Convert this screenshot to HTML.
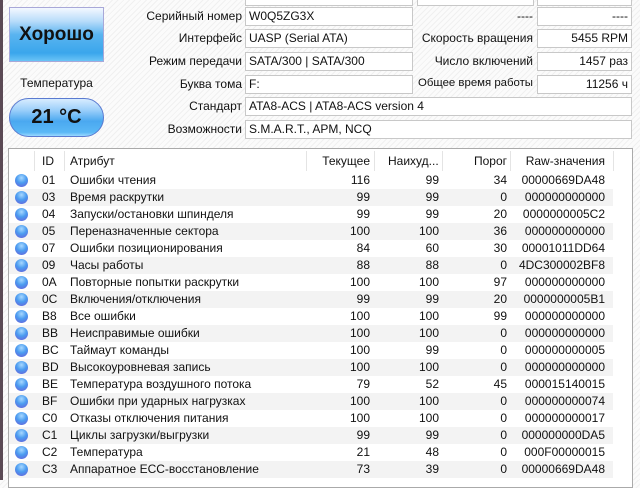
<!DOCTYPE html>
<html><head><meta charset="utf-8"><style>
*{margin:0;padding:0;box-sizing:border-box}
body{width:640px;height:480px;overflow:hidden;position:relative;font-family:"Liberation Sans","DejaVu Sans",sans-serif;font-size:12px;color:#111;
background:repeating-linear-gradient(135deg,#fbfbfb 0 3px,#f0f0f0 3px 4px);}
.edge{position:absolute;left:0;top:0;width:3px;height:480px;background:#5b4a55}
.good{position:absolute;left:9px;top:7px;width:95px;height:55px;border:1px solid #a8a8d8;
background:linear-gradient(#f4f8ff 0%,#b8dcfa 25%,#5ab4f0 50%,#3aa6ec 85%,#6ac4f6 100%);
font-weight:bold;font-size:19px;text-align:center;line-height:53px}
.tlabel{position:absolute;left:9px;top:76px;width:95px;text-align:center}
.temp{position:absolute;left:9px;top:98px;width:95px;height:39px;border-radius:20px;border:1px solid #5a7ad0;
background:linear-gradient(#d8ecff 0%,#9ccffa 30%,#4aa8f0 60%,#5ab8f6 90%,#9ad8ff 100%);
font-weight:bold;font-size:20px;text-align:center;line-height:37px}
.lab{position:absolute;text-align:right;white-space:nowrap}
.box{position:absolute;height:19px;border:1px solid #c8c8c8;background:#fff;padding:0 3px;line-height:17px;white-space:nowrap;overflow:hidden}
.r{text-align:right}
.tbl{position:absolute;left:8px;top:148px;width:625px;height:340px;border:1px solid #aaa;background:#fff;overflow:hidden}
.row{position:absolute;left:0;width:604px;height:17px;line-height:17px}
.row.alt{background:#f3f3f3}
.row span{position:absolute;white-space:nowrap}
.hdr{top:2px;height:20px;line-height:20px}
.sep{position:absolute;top:0;width:1px;height:20px;background:#e4e4e4}
.dot{position:absolute;left:6px;top:2px;width:13px;height:13px;border-radius:50%;
background:radial-gradient(circle at 50% 30%,#a8d8ff 0%,#4a9cf0 45%,#6a5ad8 100%)}
</style></head><body>
<div class="edge"></div>
<div class="box" style="left:245px;top:-13px;width:168px"></div>
<div class="box" style="left:417px;top:-13px;width:117px"></div>
<div class="box" style="left:537px;top:-13px;width:95px"></div>
<div class="good">Хорошо</div>
<div class="tlabel">Температура</div>
<div class="temp">21 °C</div>

<div class="lab" style="right:398px;top:9px">Серийный номер</div>
<div class="box" style="left:245px;top:7px;width:168px">W0Q5ZG3X</div>
<div class="lab" style="right:107px;top:9px">----</div>
<div class="box r" style="left:537px;top:7px;width:95px">----</div>

<div class="lab" style="right:398px;top:31px">Интерфейс</div>
<div class="box" style="left:245px;top:29px;width:168px">UASP (Serial ATA)</div>
<div class="lab" style="right:107px;top:31px">Скорость вращения</div>
<div class="box r" style="left:537px;top:29px;width:95px">5455 RPM</div>

<div class="lab" style="right:398px;top:54px">Режим передачи</div>
<div class="box" style="left:245px;top:52px;width:168px">SATA/300 | SATA/300</div>
<div class="lab" style="right:107px;top:54px">Число включений</div>
<div class="box r" style="left:537px;top:52px;width:95px">1457 раз</div>

<div class="lab" style="right:398px;top:77px">Буква тома</div>
<div class="box" style="left:245px;top:75px;width:168px">F:</div>
<div class="lab" style="right:107px;top:77px;font-size:11.4px">Общее время работы</div>
<div class="box r" style="left:537px;top:75px;width:95px">11256 ч</div>

<div class="lab" style="right:398px;top:99px">Стандарт</div>
<div class="box" style="left:245px;top:97px;width:387px">ATA8-ACS | ATA8-ACS version 4</div>
<div class="lab" style="right:398px;top:122px">Возможности</div>
<div class="box" style="left:245px;top:120px;width:387px">S.M.A.R.T., APM, NCQ</div>

<div class="tbl">
<div class="row hdr">
<span style="left:33px">ID</span><span style="left:61px">Атрибут</span>
<span style="right:243px">Текущее</span><span style="left:379px">Наихуд...</span>
<span style="right:106px">Порог</span><span style="right:8px">Raw-значения</span>
<div class="sep" style="left:25px"></div><div class="sep" style="left:55px"></div><div class="sep" style="left:297px"></div><div class="sep" style="left:365px"></div><div class="sep" style="left:433px"></div><div class="sep" style="left:501px"></div><div class="sep" style="left:604px"></div>
</div>
<div id="rows"></div>
</div>
<script>
var d=[["01","Ошибки чтения","116","99","34","00000669DA48"],["03","Время раскрутки","99","99","0","000000000000"],["04","Запуски/остановки шпинделя","99","99","20","0000000005C2"],["05","Переназначенные сектора","100","100","36","000000000000"],["07","Ошибки позиционирования","84","60","30","00001011DD64"],["09","Часы работы","88","88","0","4DC300002BF8"],["0A","Повторные попытки раскрутки","100","100","97","000000000000"],["0C","Включения/отключения","99","99","20","0000000005B1"],["B8","Все ошибки","100","100","99","000000000000"],["BB","Неисправимые ошибки","100","100","0","000000000000"],["BC","Таймаут команды","100","99","0","000000000005"],["BD","Высокоуровневая запись","100","100","0","000000000000"],["BE","Температура воздушного потока","79","52","45","000015140015"],["BF","Ошибки при ударных нагрузках","100","100","0","000000000074"],["C0","Отказы отключения питания","100","100","0","000000000017"],["C1","Циклы загрузки/выгрузки","99","99","0","000000000DA5"],["C2","Температура","21","48","0","000F00000015"],["C3","Аппаратное ECC-восстановление","73","39","0","00000669DA48"]];
var h="";d.forEach(function(r,i){h+='<div class="row'+(i%2?' alt':'')+'" style="top:'+(23+i*17)+'px"><div class="dot"></div><span style="left:33px">'+r[0]+'</span><span style="left:61px">'+r[1]+'</span><span style="right:243px">'+r[2]+'</span><span style="right:174px">'+r[3]+'</span><span style="right:106px">'+r[4]+'</span><span style="right:8px">'+r[5]+'</span></div>';});
document.getElementById("rows").innerHTML=h;
</script>
</body></html>
